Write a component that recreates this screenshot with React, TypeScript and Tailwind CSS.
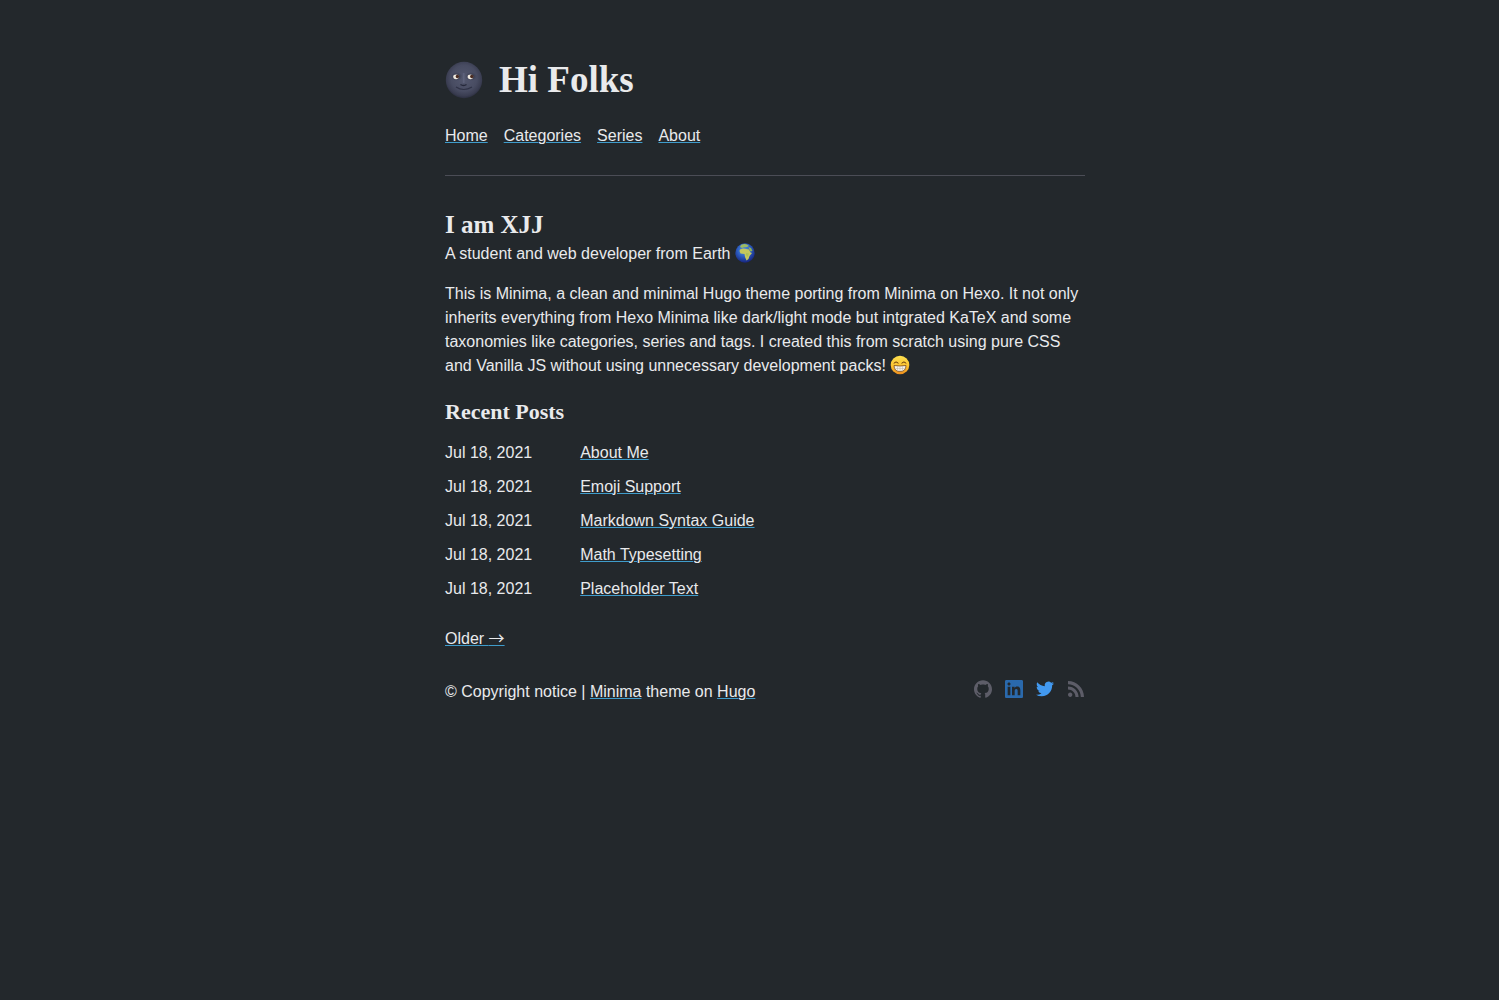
import type { ReactNode } from "react";

const posts = ["About Me", "Emoji Support", "Markdown Syntax Guide", "Math Typesetting", "Placeholder Text"];

function TextLink({ children }: { children: ReactNode }) {
  return (
    <a href="#" className="underline decoration-[#3f9ccb] decoration-1 underline-offset-1">
      {children}
    </a>
  );
}

function MoonIcon() {
  return (
    <svg viewBox="0 0 38 38" className="size-[38px] shrink-0" role="img" aria-label="New moon face">
      <defs>
        <radialGradient id="moon" cx="50%" cy="45%" r="55%">
          <stop offset="0" stopColor="#54586f" />
          <stop offset="0.65" stopColor="#484c62" />
          <stop offset="0.88" stopColor="#3a3d51" />
          <stop offset="1" stopColor="#2c2f40" />
        </radialGradient>
        <radialGradient id="socket">
          <stop offset="0" stopColor="#1f202c" />
          <stop offset="1" stopColor="#3a3d52" stopOpacity="0" />
        </radialGradient>
      </defs>
      <circle cx="19" cy="19" r="18.200" fill="url(#moon)" />
      <ellipse cx="11.5" cy="15.5" rx="6" ry="4.500" fill="url(#socket)" />
      <ellipse cx="26" cy="15.5" rx="6" ry="4.500" fill="url(#socket)" />
      <ellipse cx="11" cy="15.8" rx="2.800" ry="2.400" fill="#efe9df" />
      <ellipse cx="25.400" cy="15.8" rx="2.800" ry="2.400" fill="#efe9df" />
      <circle cx="12.4" cy="15.5" r="1.7" fill="#4a2c22" />
      <circle cx="26.8" cy="15.5" r="1.7" fill="#4a2c22" />
      <path d="M18.700 12V22" stroke="#666a84" strokeWidth="1.800" opacity=".6" />
      <path d="M15.5 23.500Q18.500 25.500 21.5 23.500" fill="none" stroke="#25283a" strokeWidth="1.5" />
      <path d="M11 26Q18.5 31 27 26" fill="none" stroke="#2f3246" strokeWidth="1.2" />
    </svg>
  );
}

function EarthIcon() {
  return (
    <svg viewBox="0 0 20 20" className="inline-block size-5 align-[-4px]" role="img" aria-label="Earth">
      <defs>
        <radialGradient id="earth" cx="45%" cy="35%" r="65%">
          <stop offset="0" stopColor="#5c9bd8" />
          <stop offset="0.5" stopColor="#2d5fc4" />
          <stop offset="1" stopColor="#17257c" />
        </radialGradient>
      </defs>
      <circle cx="10" cy="10" r="9.7" fill="url(#earth)" />
      <path d="M6 2Q9 .5 12 1.5L14 3 12 4 9 4.200 7 5 5 4z" fill="#9dbb62" />
      <path d="M5 6.500 8 5.500 11 6 14 6.500 15.500 9.500 17 10 14.500 13 13.500 16 11.500 17.500 10 14 9.500 11 5.500 10.500 4.500 8z" fill="#c5c75c" />
      <path d="M13.500 4 16 5 17.500 8 15.500 8.500 14 6z" fill="#8eaf5a" />
      <path d="M11 10 14 10.500 12.500 14 11 12z" fill="#a9bf58" />
    </svg>
  );
}

function GrinIcon() {
  return (
    <svg viewBox="0 0 20 20" className="inline-block size-5 align-[-4px]" role="img" aria-label="Beaming face">
      <defs>
        <linearGradient id="grin" x1="0" y1="0" x2="0" y2="1">
          <stop offset="0" stopColor="#fde04f" />
          <stop offset="0.6" stopColor="#fbc02f" />
          <stop offset="1" stopColor="#ed8d1c" />
        </linearGradient>
      </defs>
      <circle cx="10" cy="10" r="9.300" fill="url(#grin)" />
      <path d="M4 8Q6 5.500 8.200 8M11.800 8Q14 5.500 16 8" fill="none" stroke="#65370e" strokeWidth="1" strokeLinecap="round" />
      <path d="M4 10.500Q10 11.500 16 10.500Q16 16.500 10 16.500Q4 16.500 4 10.500z" fill="#f4f1ea" stroke="#7a4a1a" strokeWidth=".8" />
      <path d="M4.500 13.500H15.500M7.500 11V16M10 11V16.500M12.500 11V16" stroke="#b9b3a8" strokeWidth=".5" />
    </svg>
  );
}

const socials = [
  {
    name: "GitHub",
    color: "text-[#5d5d68]",
    viewBox: "0 0 24 24",
    path: "M12 .297c-6.63 0-12 5.373-12 12 0 5.303 3.438 9.8 8.205 11.385.6.113.82-.258.82-.577 0-.285-.01-1.04-.015-2.04-3.338.724-4.042-1.61-4.042-1.61C4.422 18.07 3.633 17.7 3.633 17.7c-1.087-.744.084-.729.084-.729 1.205.084 1.838 1.236 1.838 1.236 1.07 1.835 2.809 1.305 3.495.998.108-.776.417-1.305.76-1.605-2.665-.3-5.466-1.332-5.466-5.93 0-1.31.465-2.38 1.235-3.22-.135-.303-.54-1.523.105-3.176 0 0 1.005-.322 3.3 1.23.96-.267 1.98-.399 3-.405 1.02.006 2.04.138 3 .405 2.28-1.552 3.285-1.23 3.285-1.23.645 1.653.24 2.873.12 3.176.765.84 1.23 1.91 1.23 3.22 0 4.61-2.805 5.625-5.475 5.92.42.36.81 1.096.81 2.22 0 1.606-.015 2.896-.015 3.286 0 .315.21.69.825.57C20.565 22.092 24 17.592 24 12.297c0-6.627-5.373-12-12-12",
  },
  {
    name: "LinkedIn",
    color: "text-[#2a69ac]",
    viewBox: "0 0 24 24",
    path: "M20.447 20.452h-3.554v-5.569c0-1.328-.027-3.037-1.852-3.037-1.853 0-2.136 1.445-2.136 2.939v5.667H9.351V9h3.414v1.561h.046c.477-.9 1.637-1.85 3.37-1.85 3.601 0 4.267 2.37 4.267 5.455v6.286zM5.337 7.433c-1.144 0-2.063-.926-2.063-2.065 0-1.138.92-2.063 2.063-2.063 1.14 0 2.064.925 2.064 2.063 0 1.139-.925 2.065-2.064 2.065zm1.782 13.019H3.555V9h3.564v11.452zM22.225 0H1.771C.792 0 0 .774 0 1.729v20.542C0 23.227.792 24 1.771 24h20.451C23.2 24 24 23.227 24 22.271V1.729C24 .774 23.2 0 22.222 0h.003z",
  },
  {
    name: "Twitter",
    color: "text-[#4299f0]",
    viewBox: "0 0 24 24",
    path: "M23.953 4.57a10 10 0 01-2.825.775 4.958 4.958 0 002.163-2.723c-.951.555-2.005.959-3.127 1.184a4.92 4.92 0 00-8.384 4.482C7.69 8.095 4.067 6.13 1.64 3.162a4.822 4.822 0 00-.666 2.475c0 1.71.87 3.213 2.188 4.096a4.904 4.904 0 01-2.228-.616v.06a4.923 4.923 0 003.946 4.827 4.996 4.996 0 01-2.212.085 4.936 4.936 0 004.604 3.417 9.867 9.867 0 01-6.102 2.105c-.39 0-.779-.023-1.17-.067a13.995 13.995 0 007.557 2.209c9.053 0 13.998-7.496 13.998-13.985 0-.21 0-.42-.015-.63A9.935 9.935 0 0024 4.59z",
  },
  {
    name: "RSS",
    color: "text-[#5d5d68]",
    viewBox: "-1.5 -1.5 27 27",
    path: "M19.199 24C19.199 13.467 10.533 4.8 0 4.8V0c13.165 0 24 10.835 24 24h-4.801zM3.291 17.415c1.814 0 3.293 1.479 3.293 3.295 0 1.813-1.485 3.29-3.301 3.29C1.47 24 0 22.526 0 20.71s1.475-3.294 3.291-3.295zM15.909 24h-4.665c0-6.169-5.075-11.245-11.244-11.245V8.09c8.727 0 15.909 7.184 15.909 15.91z",
  },
];

export default function App() {
  return (
    <div className="min-h-screen bg-[#23282c] px-4 font-['Liberation_Sans',Arial,sans-serif] text-base text-[#e9eaec] md:pr-0 md:pl-[31px]">
      <div className="mx-auto max-w-[640px] pt-14">
        <header className="border-b border-[#4b4d56] pb-[27px]">
          <h1 className="flex items-center gap-4 font-['Liberation_Serif',serif] text-[37px] leading-12 font-bold">
            <MoonIcon />
            Hi Folks
          </h1>
          <nav className="mt-5 flex flex-wrap gap-4">
            {["Home", "Categories", "Series", "About"].map((label) => (
              <TextLink key={label}>{label}</TextLink>
            ))}
          </nav>
        </header>
        <main className="pt-8">
          <h2 className="font-['Liberation_Serif',serif] text-[25px] leading-[34px] font-bold">I am XJJ</h2>
          <p>
            A student and web developer from Earth <EarthIcon />
          </p>
          <p className="mt-4">
            This is Minima, a clean and minimal Hugo theme porting from Minima on Hexo. It not only inherits everything
            from Hexo Minima like dark/light mode but intgrated KaTeX and some taxonomies like categories, series and
            tags. I created this from scratch using pure CSS and Vanilla JS without using unnecessary development
            packs! <GrinIcon />
          </p>
          <h3 className="mt-[18px] font-['Liberation_Serif',serif] text-[22px] leading-8 font-bold">Recent Posts</h3>
          <ul className="mt-[13px] flex flex-col gap-[10px]">
            {posts.map((title) => (
              <li key={title} className="flex gap-12">
                <time dateTime="2021-07-18">Jul 18, 2021</time>
                <TextLink>{title}</TextLink>
              </li>
            ))}
          </ul>
          <div className="mt-[26px]">
            <TextLink>
              Older <span className="font-['Noto_Sans_CJK_SC','Inter',sans-serif] leading-none">→</span>
            </TextLink>
          </div>
        </main>
        <footer className="flex flex-wrap items-start justify-between gap-4 py-[29px]">
          <p>
            © Copyright notice | <TextLink>Minima</TextLink> theme on <TextLink>Hugo</TextLink>
          </p>
          <div className="flex gap-[13px]">
            {socials.map((s) => (
              <a key={s.name} href="#" aria-label={s.name} className={s.color}>
                <svg viewBox={s.viewBox} className="size-[18px]" fill="currentColor" aria-hidden="true">
                  <path d={s.path} />
                </svg>
              </a>
            ))}
          </div>
        </footer>
      </div>
    </div>
  );
}
